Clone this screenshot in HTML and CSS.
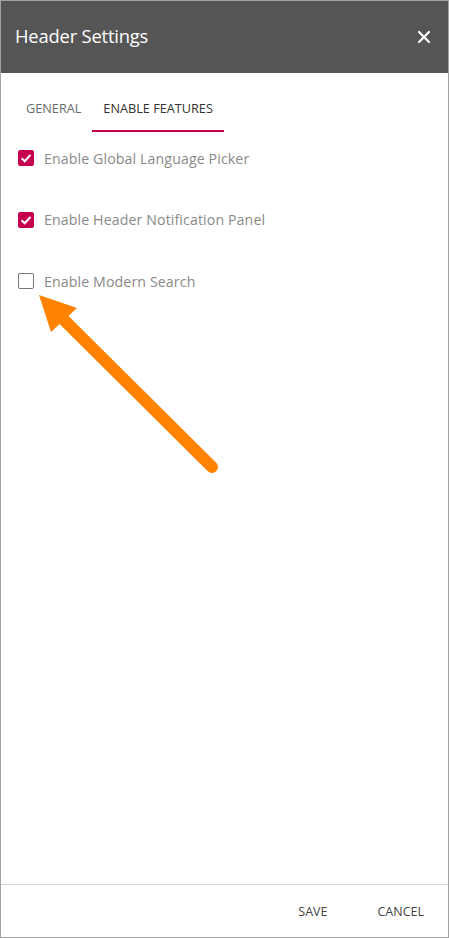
FILE: index.html
```html
<!DOCTYPE html>
<html>
<head>
<meta charset="utf-8">
<link rel="stylesheet" href="styles.css">
</head>
<body>
<div class="panel">
  <header class="panel-header">
    <h1 class="title">Header Settings</h1>
    <svg class="close" width="12" height="12" viewBox="0 0 12 12"><path d="M1 1 L11 11 M11 1 L1 11" stroke="#fff" stroke-width="2.2" stroke-linecap="square"/></svg>
  </header>
  <nav class="tabs">
    <span class="tab">GENERAL</span>
    <span class="tab active">ENABLE FEATURES</span>
  </nav>
  <main class="options">
    <label class="option"><span class="box checked"><svg width="16" height="16" viewBox="0 0 16 16"><path d="M3.5 8.2 L6.7 11.2 L12.5 4.8" fill="none" stroke="#fff" stroke-width="2"/></svg></span><span class="label">Enable Global Language Picker</span></label>
    <label class="option"><span class="box checked"><svg width="16" height="16" viewBox="0 0 16 16"><path d="M3.5 8.2 L6.7 11.2 L12.5 4.8" fill="none" stroke="#fff" stroke-width="2"/></svg></span><span class="label">Enable Header Notification Panel</span></label>
    <label class="option"><span class="box"></span><span class="label">Enable Modern Search</span></label>
  </main>
  <footer class="panel-footer">
    <span class="btn">SAVE</span>
    <span class="btn">CANCEL</span>
  </footer>
  <svg class="arrow" width="449" height="938" viewBox="0 0 449 938">
    <line x1="212" y1="467" x2="62" y2="318" stroke="#ff8200" stroke-width="12" stroke-linecap="round"/>
    <polygon points="39,295 77,308 51,332" fill="#ff8200"/>
  </svg>
</div>
</body>
</html>
```
FILE: styles.css
```css
html, body {
  margin: 0;
  padding: 0;
  background: #fff;
}
.panel {
  position: relative;
  width: 449px;
  height: 938px;
  box-sizing: border-box;
  border: 1px solid #a3a3a3;
  display: flex;
  flex-direction: column;
  font-family: "Open Sans", "Noto Sans", sans-serif;
}
.panel-header {
  height: 72px;
  box-sizing: border-box;
  flex: none;
  background: #555555;
  display: flex;
  align-items: center;
  justify-content: space-between;
  padding: 0 18px 3px 14px;
}
.title {
  margin: 0;
  font-size: 18.4px;
  font-weight: 400;
  color: #fff;
  letter-spacing: -0.2px;
}
.close {
  display: block;
  margin-top: 2px;
}
.tabs {
  display: flex;
  padding: 0 0 0 14px;
  margin-top: 25px;
  height: 34px;
}
.tab {
  font-size: 12.7px;
  color: #6b6b6b;
  padding: 0 11px;
  line-height: 21px;
  box-sizing: border-box;
  height: 34px;
}
.tab.active {
  color: #333;
  border-bottom: 2px solid #c4004f;
}
.options {
  flex: 1;
  display: flex;
  flex-direction: column;
  gap: 45.5px;
  padding: 18px 0 0 17px;
}
.option {
  display: flex;
  align-items: center;
  height: 16px;
}
.box {
  width: 16px;
  height: 16px;
  box-sizing: border-box;
  border: 1.5px solid #757575;
  border-radius: 2px;
  display: flex;
  align-items: center;
  justify-content: center;
}
.box.checked {
  background: #c4004f;
  border-color: #c4004f;
}
.box svg {
  flex: none;
}
.label {
  margin-left: 10px;
  font-size: 14.2px;
  color: #8a8a8a;
  letter-spacing: 0.1px;
}
.panel-footer {
  height: 52px;
  flex: none;
  border-top: 1px solid #d2d2d2;
  display: flex;
  justify-content: flex-end;
  align-items: center;
  gap: 50px;
  padding-right: 24px;
}
.btn {
  font-size: 12.5px;
  color: #444;
}
.arrow {
  position: absolute;
  left: -1px;
  top: -1px;
  pointer-events: none;
}
```
